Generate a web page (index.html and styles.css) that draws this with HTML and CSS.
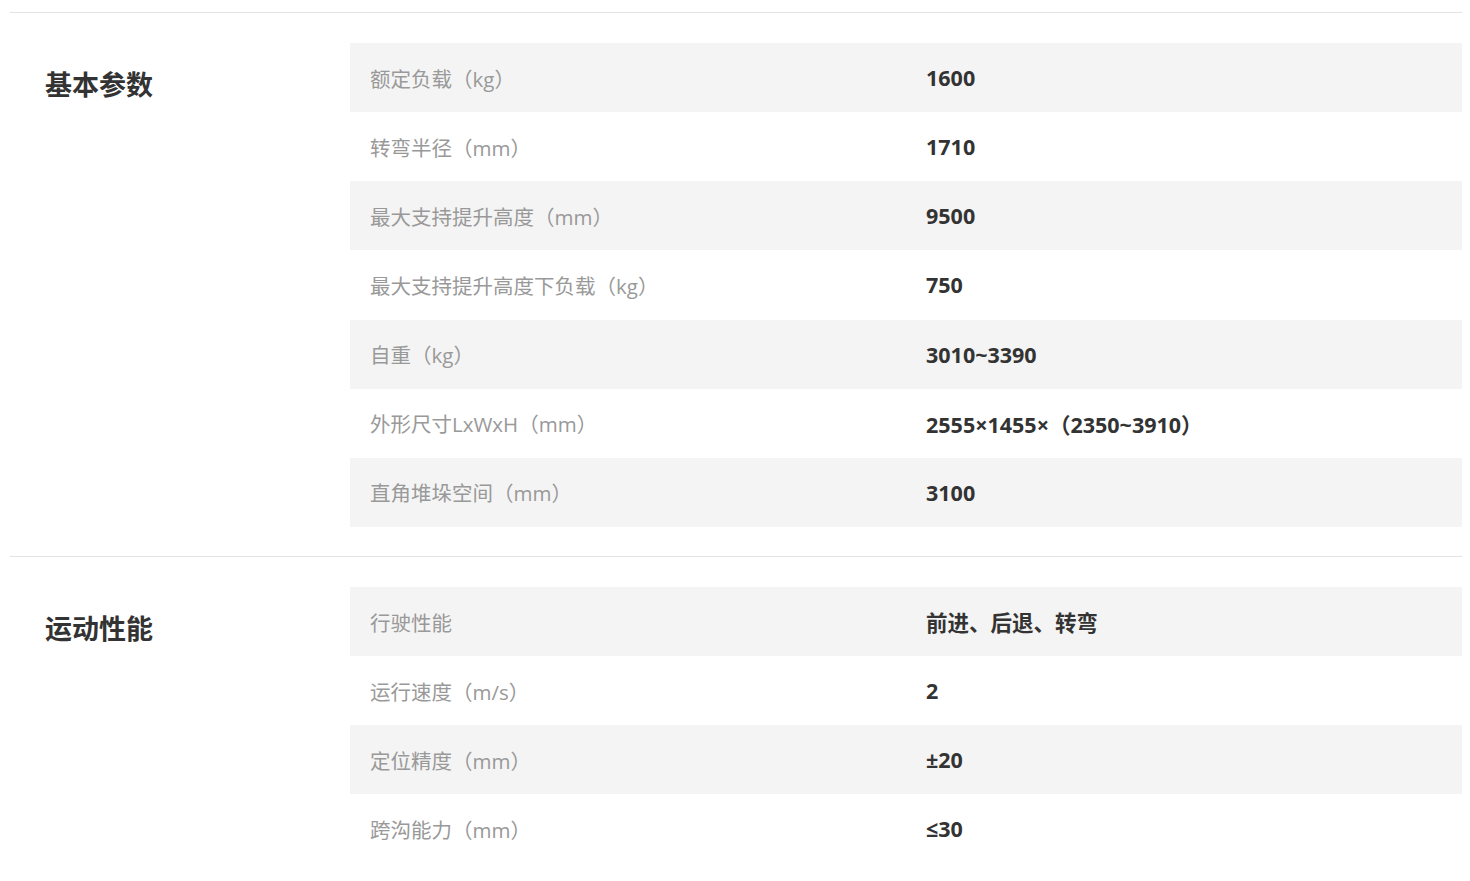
FILE: index.html
```html
<!DOCTYPE html>
<html lang="zh-CN">
<head>
<meta charset="utf-8">
<title>参数</title>
<link rel="stylesheet" href="styles.css">
</head>
<body>
<div class="page">
  <section class="group">
    <h2 class="group-title">基本参数</h2>
    <div class="table">
      <div class="row"><div class="label">额定负载（kg）</div><div class="value">1600</div></div>
      <div class="row"><div class="label">转弯半径（mm）</div><div class="value">1710</div></div>
      <div class="row"><div class="label">最大支持提升高度（mm）</div><div class="value">9500</div></div>
      <div class="row"><div class="label">最大支持提升高度下负载（kg）</div><div class="value">750</div></div>
      <div class="row"><div class="label">自重（kg）</div><div class="value">3010~3390</div></div>
      <div class="row"><div class="label">外形尺寸LxWxH（mm）</div><div class="value">2555×1455×（2350~3910）</div></div>
      <div class="row"><div class="label">直角堆垛空间（mm）</div><div class="value">3100</div></div>
    </div>
  </section>
  <section class="group">
    <h2 class="group-title">运动性能</h2>
    <div class="table">
      <div class="row"><div class="label">行驶性能</div><div class="value">前进、后退、转弯</div></div>
      <div class="row"><div class="label">运行速度（m/s）</div><div class="value">2</div></div>
      <div class="row"><div class="label">定位精度（mm）</div><div class="value">±20</div></div>
      <div class="row"><div class="label">跨沟能力（mm）</div><div class="value">≤30</div></div>
    </div>
  </section>
</div>
</body>
</html>
```
FILE: styles.css
```css
html, body {
  margin: 0;
  padding: 0;
  background: #fff;
}
body {
  font-family: "Open Sans", "Noto Sans CJK SC", sans-serif;
  color: #333;
  text-spacing-trim: space-all;
  text-autospace: no-autospace;
  font-feature-settings: "chws" 0, "halt" 0, "palt" 0;
}
.page {
  padding: 12px 8px 0 10px;
}
.group {
  display: flex;
  border-top: 1px solid #e3e3e3;
  padding: 30px 0 29px;
}
.group-title {
  width: 305px;
  flex: none;
  margin: 0;
  padding: 24px 0 0 35px;
  font-size: 27px;
  line-height: 36px;
  font-weight: 700;
  color: #333;
}
.table {
  flex: 1;
  display: flex;
  flex-direction: column;
}
.row {
  display: grid;
  grid-template-columns: 1fr 1fr;
  height: 69.15px;
  align-items: center;
}
.row:nth-child(odd) {
  background: #f4f4f4;
}
.label {
  padding-left: 20px;
  font-size: 20.5px;
  color: #999;
}
.value {
  padding-left: 20px;
  font-size: 21.5px;
  font-weight: 700;
  color: #333;
}
```
